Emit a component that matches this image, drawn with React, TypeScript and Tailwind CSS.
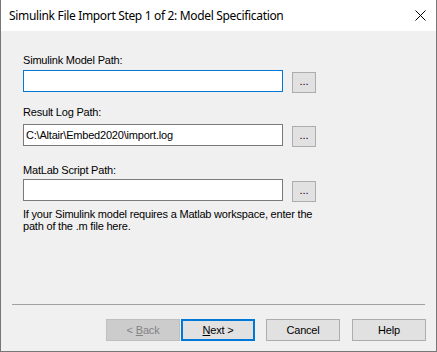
import React from "react";

const ui = { fontFamily: '"Liberation Sans", Arial, sans-serif' };
const title = { fontFamily: '"Noto Sans", "Open Sans", sans-serif' };

function Ellipsis() {
  return (
    <div className="ml-[9px] mt-[2px] flex h-[21px] w-[24px] items-center justify-center border border-[#adadad] bg-[#e1e1e1] text-[11px] leading-none tracking-normal text-black">
      <span className="-mt-[3px]">...</span>
    </div>
  );
}

function Btn({
  children,
  variant = "normal",
  className = "",
}: {
  children: React.ReactNode;
  variant?: "normal" | "disabled" | "default";
  className?: string;
}) {
  const v =
    variant === "disabled"
      ? "border border-[#bfbfbf] bg-[#cccccc] text-[#838383]"
      : variant === "default"
      ? "border-2 border-[#0078d7] bg-[#e1e1e1] text-black"
      : "border border-[#adadad] bg-[#e1e1e1] text-black";
  return (
    <div className={`flex h-[22px] w-[74px] items-center justify-center text-[11px] tracking-[-0.2px] ${v} ${className}`}>
      {children}
    </div>
  );
}

export default function App() {
  return (
    <div
      className="flex h-[352px] w-[437px] flex-col border-x border-b border-[#777777] bg-[#f0f0f0]"
      style={ui}
    >
      <div className="flex h-[31px] shrink-0 items-center justify-between bg-white pl-[8px] pr-[10px]">
        <span className="text-[12px] tracking-[-0.33px] text-black" style={title}>
          Simulink File Import Step 1 of 2: Model Specification
        </span>
        <svg width="11" height="11" viewBox="0 0 11 11">
          <path d="M0.5 0.5 L10.5 10.5 M10.5 0.5 L0.5 10.5" stroke="#000" strokeWidth="1" />
        </svg>
      </div>

      <div className="flex flex-1 flex-col">
        <div className="flex flex-col pl-[22px] pt-[23px] text-[11px] leading-[13px] tracking-[-0.2px] text-black">
          <div>Simulink Model Path:</div>
          <div className="mt-[3px] flex items-start">
            <div className="h-[22px] w-[260px] border border-[#0078d7] bg-white" />
            <Ellipsis />
          </div>

          <div className="mt-[13px]">Result Log Path:</div>
          <div className="mt-[5px] flex items-start">
            <div className="flex h-[22px] w-[260px] items-center border border-[#7a7a7a] bg-white pl-[2px]">
              C:\Altair\Embed2020\import.log
            </div>
            <Ellipsis />
          </div>

          <div className="mt-[17px]">MatLab Script Path:</div>
          <div className="mt-[2px] flex items-start">
            <div className="h-[22px] w-[260px] border border-[#7a7a7a] bg-white" />
            <Ellipsis />
          </div>
          <div className="mt-[6px] w-[300px] leading-[12px]">
            If your Simulink model requires a Matlab workspace, enter the path of the .m file here.
          </div>
        </div>

        <div className="mt-auto flex flex-col pb-[10px]">
          <div className="mx-[11px] h-px bg-[#a0a0a0]" />
          <div className="mt-[14px] flex justify-end pr-[10px]">
            <Btn variant="disabled">
              &lt; <span className="ml-[3px] underline">B</span>ack
            </Btn>
            <Btn variant="default" className="ml-[1px]">
              <span className="underline">N</span>ext &gt;
            </Btn>
            <Btn className="ml-[11px]">Cancel</Btn>
            <Btn className="ml-[12px]">Help</Btn>
          </div>
        </div>
      </div>
    </div>
  );
}
